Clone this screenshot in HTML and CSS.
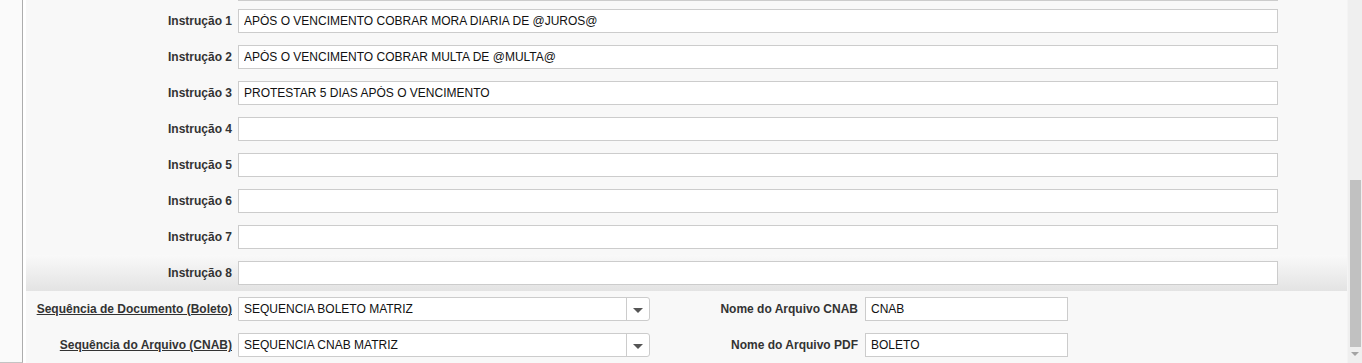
FILE: index.html
```html
<!DOCTYPE html>
<html lang="pt-BR">
<head>
    <meta charset="UTF-8">
    <meta name="viewport" content="width=device-width, initial-scale=1.0">
    <title>Configuração de Boleto</title>
    <link rel="stylesheet" href="styles.css">
</head>
<body>
    <div class="page">
        <div class="sidebar"></div>
        <div class="panel">
            <div class="cut-field"></div>
            <div class="row">
                <label class="lbl">Instrução 1</label>
                <input class="field wide" type="text" value="APÓS O VENCIMENTO COBRAR MORA DIARIA DE @JUROS@">
            </div>
            <div class="row">
                <label class="lbl">Instrução 2</label>
                <input class="field wide" type="text" value="APÓS O VENCIMENTO COBRAR MULTA DE @MULTA@">
            </div>
            <div class="row">
                <label class="lbl">Instrução 3</label>
                <input class="field wide" type="text" value="PROTESTAR 5 DIAS APÓS O VENCIMENTO">
            </div>
            <div class="row">
                <label class="lbl">Instrução 4</label>
                <input class="field wide" type="text" value="">
            </div>
            <div class="row">
                <label class="lbl">Instrução 5</label>
                <input class="field wide" type="text" value="">
            </div>
            <div class="row">
                <label class="lbl">Instrução 6</label>
                <input class="field wide" type="text" value="">
            </div>
            <div class="row">
                <label class="lbl">Instrução 7</label>
                <input class="field wide" type="text" value="">
            </div>
            <div class="row active">
                <label class="lbl">Instrução 8</label>
                <input class="field wide" type="text" value="">
            </div>
            <div class="row">
                <label class="lbl link">Sequência de Documento (Boleto)</label>
                <div class="select">
                    <span class="select-text">SEQUENCIA BOLETO MATRIZ</span>
                    <span class="select-btn"><span class="caret"></span></span>
                </div>
                <label class="lbl lbl-mid">Nome do Arquivo CNAB</label>
                <input class="field short" type="text" value="CNAB">
            </div>
            <div class="row">
                <label class="lbl link">Sequência do Arquivo (CNAB)</label>
                <div class="select">
                    <span class="select-text">SEQUENCIA CNAB MATRIZ</span>
                    <span class="select-btn"><span class="caret"></span></span>
                </div>
                <label class="lbl lbl-mid">Nome do Arquivo PDF</label>
                <input class="field short" type="text" value="BOLETO">
            </div>
        </div>
        <div class="scrollbar">
            <div class="thumb"></div>
            <div class="down"></div>
        </div>
    </div>
</body>
</html>
```

FILE: styles.css
```css
html, body {
    margin: 0;
    height: 363px;
    overflow: hidden;
}
body {
    font-family: "Liberation Sans", Arial, sans-serif;
    font-size: 12px;
    background-color: #fafafa;
}

.page {
    display: flex;
    height: 363px;
}

.sidebar {
    width: 22px;
    height: 362px;
    border-right: 1px solid #adadad;
    border-bottom: 1px solid #c4c4c4;
    background-color: #fafafa;
}

.panel {
    flex: 1;
    border-left: 3px solid #ffffff;
    background-color: #f8f8f8;
    overflow: hidden;
}

.cut-field {
    width: 1040px;
    height: 1px;
    margin-left: 212px;
    margin-bottom: 2px;
    background-color: #cccccc;
}

.row {
    display: flex;
    align-items: center;
    height: 36px;
}
.row.active {
    background: linear-gradient(#f9f9f9, #e3e3e3);
}

.lbl {
    width: 206px;
    margin-right: 6px;
    text-align: right;
    font-weight: bold;
    color: #333333;
    white-space: nowrap;
}
.lbl.link {
    text-decoration: underline;
}
.lbl-mid {
    width: 208px;
    margin-right: 7px;
}

.field {
    box-sizing: border-box;
    height: 24px;
    margin: 0;
    padding: 0 5px;
    border: 1px solid #cccccc;
    background-color: #ffffff;
    font-family: "Liberation Sans", Arial, sans-serif;
    font-size: 12px;
    color: #111111;
    outline: none;
}
.wide {
    width: 1040px;
}
.short {
    width: 203px;
}

.select {
    box-sizing: border-box;
    display: flex;
    align-items: stretch;
    width: 412px;
    height: 24px;
    border: 1px solid #cccccc;
    border-radius: 0 3px 3px 0;
    background-color: #ffffff;
    color: #111111;
}
.select-text {
    flex: 1;
    padding-left: 5px;
    line-height: 22px;
}
.select-btn {
    display: flex;
    align-items: center;
    justify-content: center;
    width: 22px;
    border-left: 1px solid #cccccc;
}
.caret {
    width: 0;
    height: 0;
    border-left: 5px solid transparent;
    border-right: 5px solid transparent;
    border-top: 5px solid #555555;
    margin-top: 2px;
}

.scrollbar {
    display: flex;
    flex-direction: column;
    align-items: center;
    width: 14px;
    border-left: 1px solid #f4f4f4;
    background-color: #efefef;
}
.thumb {
    width: 11px;
    height: 167px;
    margin-top: 180px;
    background-color: #c1c1c1;
}
.down {
    width: 0;
    height: 0;
    margin-top: 5px;
    border-left: 4px solid transparent;
    border-right: 4px solid transparent;
    border-top: 4px solid #a3a3a3;
}
```
